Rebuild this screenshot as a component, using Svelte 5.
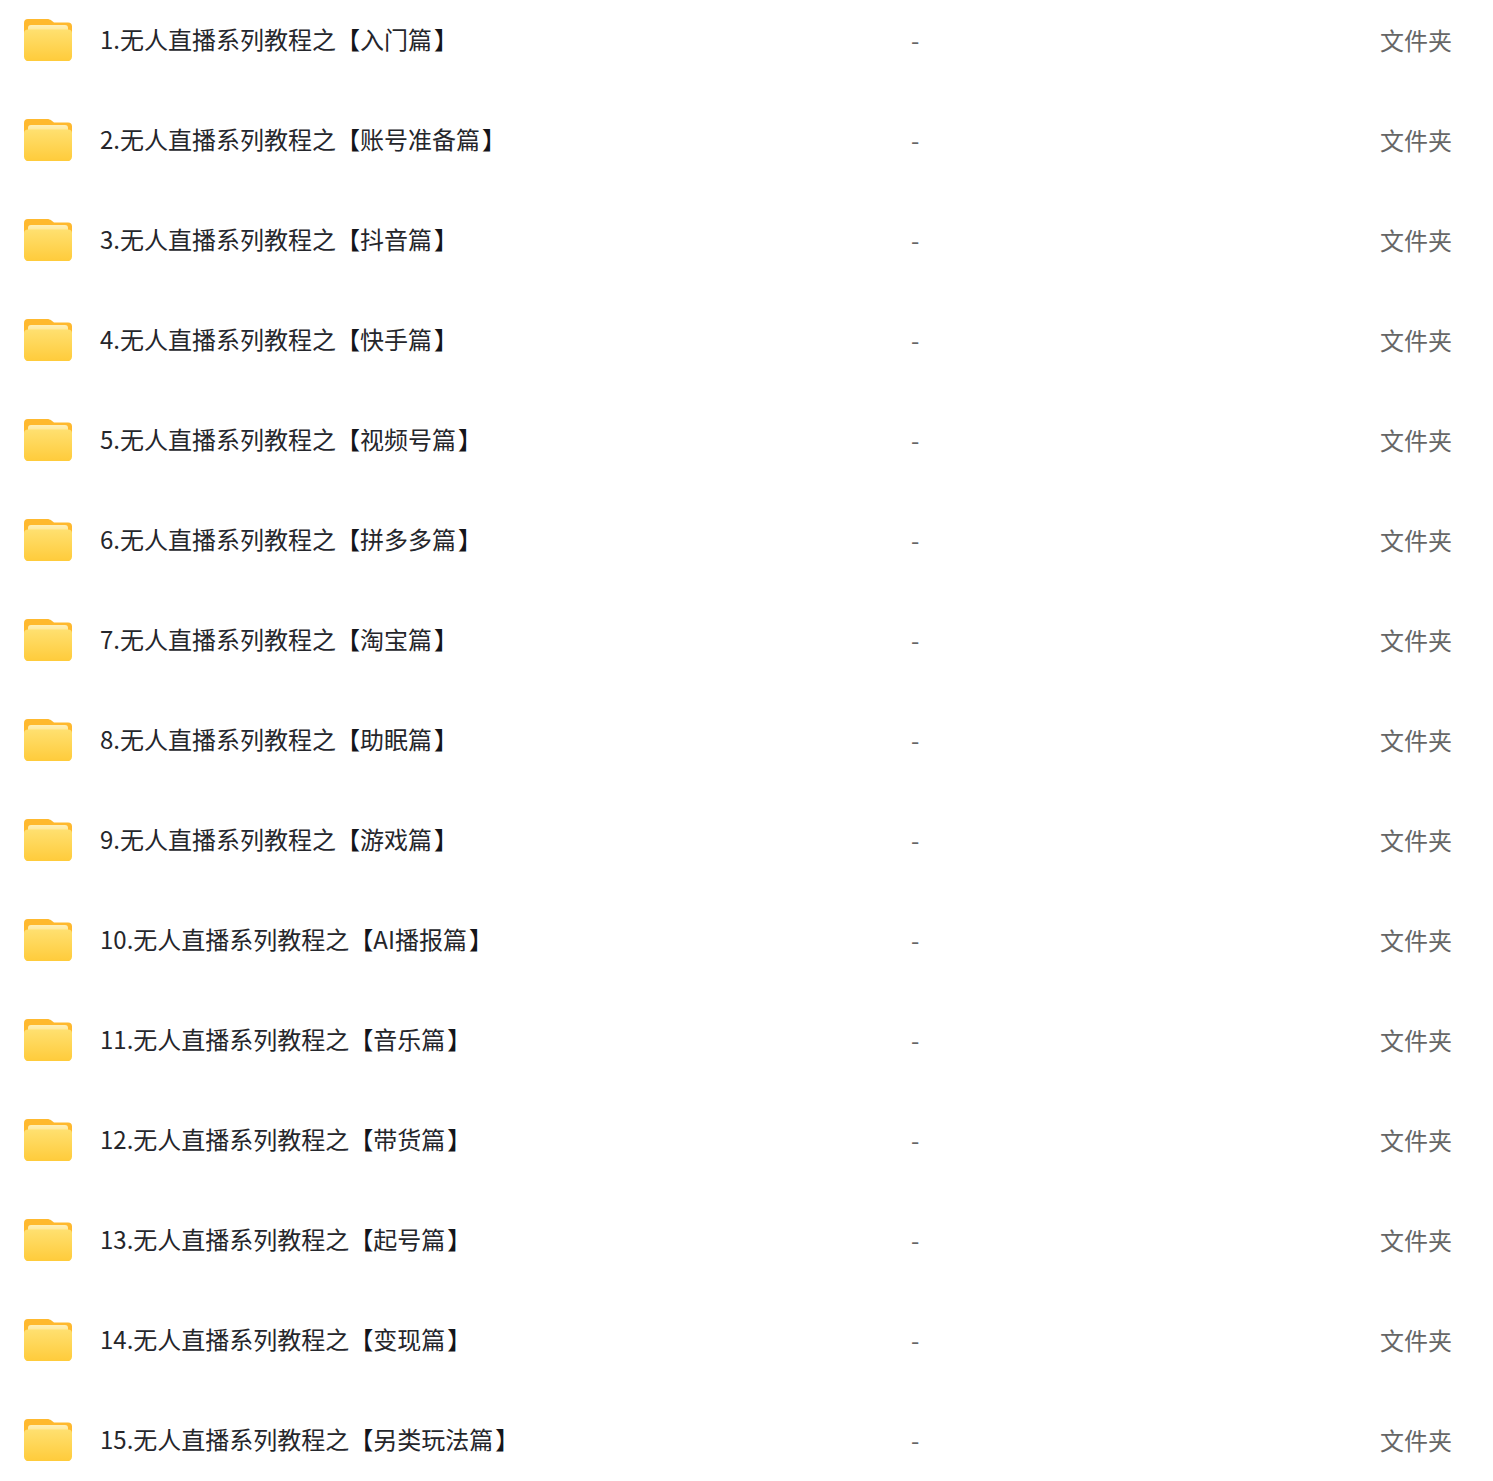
<script>
  const names = [
    ['1.无人直播系列教程之', '入门篇'],
    ['2.无人直播系列教程之', '账号准备篇'],
    ['3.无人直播系列教程之', '抖音篇'],
    ['4.无人直播系列教程之', '快手篇'],
    ['5.无人直播系列教程之', '视频号篇'],
    ['6.无人直播系列教程之', '拼多多篇'],
    ['7.无人直播系列教程之', '淘宝篇'],
    ['8.无人直播系列教程之', '助眠篇'],
    ['9.无人直播系列教程之', '游戏篇'],
    ['10.无人直播系列教程之', 'AI播报篇'],
    ['11.无人直播系列教程之', '音乐篇'],
    ['12.无人直播系列教程之', '带货篇'],
    ['13.无人直播系列教程之', '起号篇'],
    ['14.无人直播系列教程之', '变现篇'],
    ['15.无人直播系列教程之', '另类玩法篇']
  ];
</script>

<div class="list">
  {#each names as [title, tag], i}
    <div class="row">
      <svg class="folder" viewBox="0 0 48 42.500" width="48" height="42.500">
        <defs>
          <linearGradient id="paper{i}" x1="0" y1="0" x2="0" y2="1">
            <stop offset="0" stop-color="#ffefb8" />
            <stop offset="1" stop-color="#ffe27a" />
          </linearGradient>
          <linearGradient id="front{i}" x1="0" y1="0" x2="0" y2="1">
            <stop offset="0" stop-color="#ffe070" />
            <stop offset="1" stop-color="#ffcb3a" />
          </linearGradient>
        </defs>
        <path d="M0 4a4 4 0 0 1 4-4h19c2 0 3 .5 4.500 1.500L30 3.500h14a4 4 0 0 1 4 4V20H0z" fill="#ffb92e" />
        <rect x="4" y="6" width="40" height="10" rx="3" fill="url(#paper{i})" />
        <path d="M0 14.500a4 4 0 0 1 4-4h40a4 4 0 0 1 4 4v23a5 5 0 0 1-5 5H5a5 5 0 0 1-5-5z" fill="url(#front{i})" />
      </svg>
      <div class="name">{title}<span class="open">【</span>{tag}<span class="close">】</span></div>
      <div class="size">-</div>
      <div class="type">文件夹</div>
    </div>
  {/each}
</div>

<style>
  :global(body) {
    margin: 0;
    background: #fff;
  }
  .list {
    font-family: "Noto Sans CJK SC", "Noto Sans", sans-serif;
    font-size: 24px;
  }
  .row {
    display: flex;
    align-items: center;
    height: 100px;
    padding: 0 41px 0 24px;
    margin-top: -11px;
    margin-bottom: 11px;
  }
  .folder {
    flex: none;
    margin-top: 2px;
    margin-right: 28px;
  }
  .name {
    width: 811px;
    color: #25262b;
    white-space: nowrap;
    line-height: 34px;
  }
  .open {
    color: #14151a;
  }
  .close {
    margin-left: 2px;
    color: #14151a;
  }
  .size {
    flex: 1;
    color: #666;
  }
  .type {
    color: #666;
  }
</style>
